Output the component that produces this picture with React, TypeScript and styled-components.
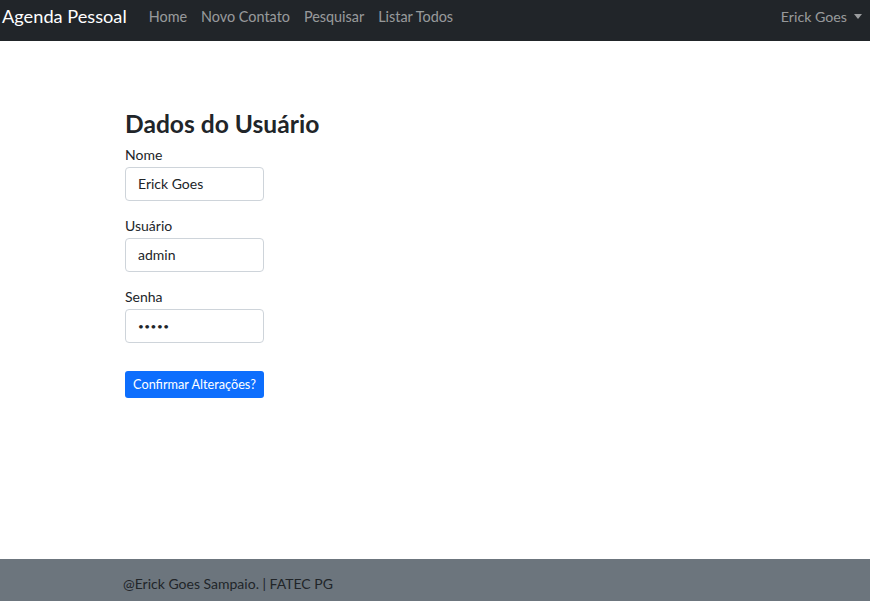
import React from "react";
import styled, { createGlobalStyle } from "styled-components";

const Global = createGlobalStyle`
  html, body { margin: 0; padding: 0; }
  body {
    font-family: Lato, "Segoe UI", "Noto Sans", sans-serif;
    color: #212529;
    background: #fff;
  }
  * { box-sizing: border-box; }
`;

const Page = styled.div`
  min-height: 100vh;
  display: flex;
  flex-direction: column;
`;

const NavBar = styled.nav`
  height: 41px;
  background: #212529;
  display: flex;
  align-items: center;
  padding: 0 8px 9px 2px;
`;

const Brand = styled.a`
  color: #fff;
  font-size: 18.2px;
  margin-right: 22px;
  white-space: nowrap;
`;

const NavLinks = styled.div`
  display: flex;
  gap: 14px;
  flex: 1;
`;

const NavLink = styled.a`
  color: rgba(255, 255, 255, 0.55);
  font-size: 14.4px;
`;

const UserMenu = styled.a`
  color: rgba(255, 255, 255, 0.55);
  font-size: 14.2px;
  display: flex;
  align-items: center;
  gap: 7px;
`;

const Caret = styled.span`
  width: 0;
  height: 0;
  border-left: 4px solid transparent;
  border-right: 4px solid transparent;
  border-top: 5px solid rgba(255, 255, 255, 0.55);
`;

const Main = styled.main`
  flex: 1;
  padding: 68px 0 0 125px;
`;

const Title = styled.h3`
  margin: 0 0 7px;
  font-size: 24.6px;
  font-weight: 700;
  line-height: 1.2;
`;

const Field = styled.div`
  margin-bottom: 16px;
  display: flex;
  flex-direction: column;
  align-items: flex-start;
`;

const Label = styled.label`
  font-size: 14px;
  line-height: 18px;
  margin-bottom: 3px;
`;

const Input = styled.input<{ $secret?: boolean }>`
  width: 139px;
  height: 34px;
  padding: 0 12px;
  font-family: inherit;
  font-size: ${(p) => (p.$secret ? "10px" : "14px")};
  letter-spacing: ${(p) => (p.$secret ? "0.5px" : "normal")};
  color: #212529;
  border: 1px solid #ced4da;
  border-radius: 4px;
  background: #fff;
  outline: none;
`;

const Button = styled.button`
  margin-top: 12px;
  width: 139px;
  height: 27px;
  background: #0d6efd;
  color: #fff;
  border: none;
  border-radius: 3px;
  font-family: inherit;
  font-size: 12.7px;
  padding: 0;
`;

const Footer = styled.footer`
  height: 42px;
  background: #6c757d;
  display: flex;
  align-items: flex-start;
  padding: 15px 0 0 123px;
  font-size: 14px;
  line-height: 20px;
  color: #212529;
`;

export default function App() {
  return (
    <Page>
      <Global />
      <NavBar>
        <Brand>Agenda Pessoal</Brand>
        <NavLinks>
          <NavLink>Home</NavLink>
          <NavLink>Novo Contato</NavLink>
          <NavLink>Pesquisar</NavLink>
          <NavLink>Listar Todos</NavLink>
        </NavLinks>
        <UserMenu>
          Erick Goes <Caret />
        </UserMenu>
      </NavBar>
      <Main>
        <Title>Dados do Usuário</Title>
        <Field>
          <Label>Nome</Label>
          <Input defaultValue="Erick Goes" />
        </Field>
        <Field>
          <Label>Usuário</Label>
          <Input defaultValue="admin" />
        </Field>
        <Field>
          <Label>Senha</Label>
          <Input $secret type="password" defaultValue="admin" />
        </Field>
        <Button>Confirmar Alterações?</Button>
      </Main>
      <Footer>@Erick Goes Sampaio. | FATEC PG</Footer>
    </Page>
  );
}
